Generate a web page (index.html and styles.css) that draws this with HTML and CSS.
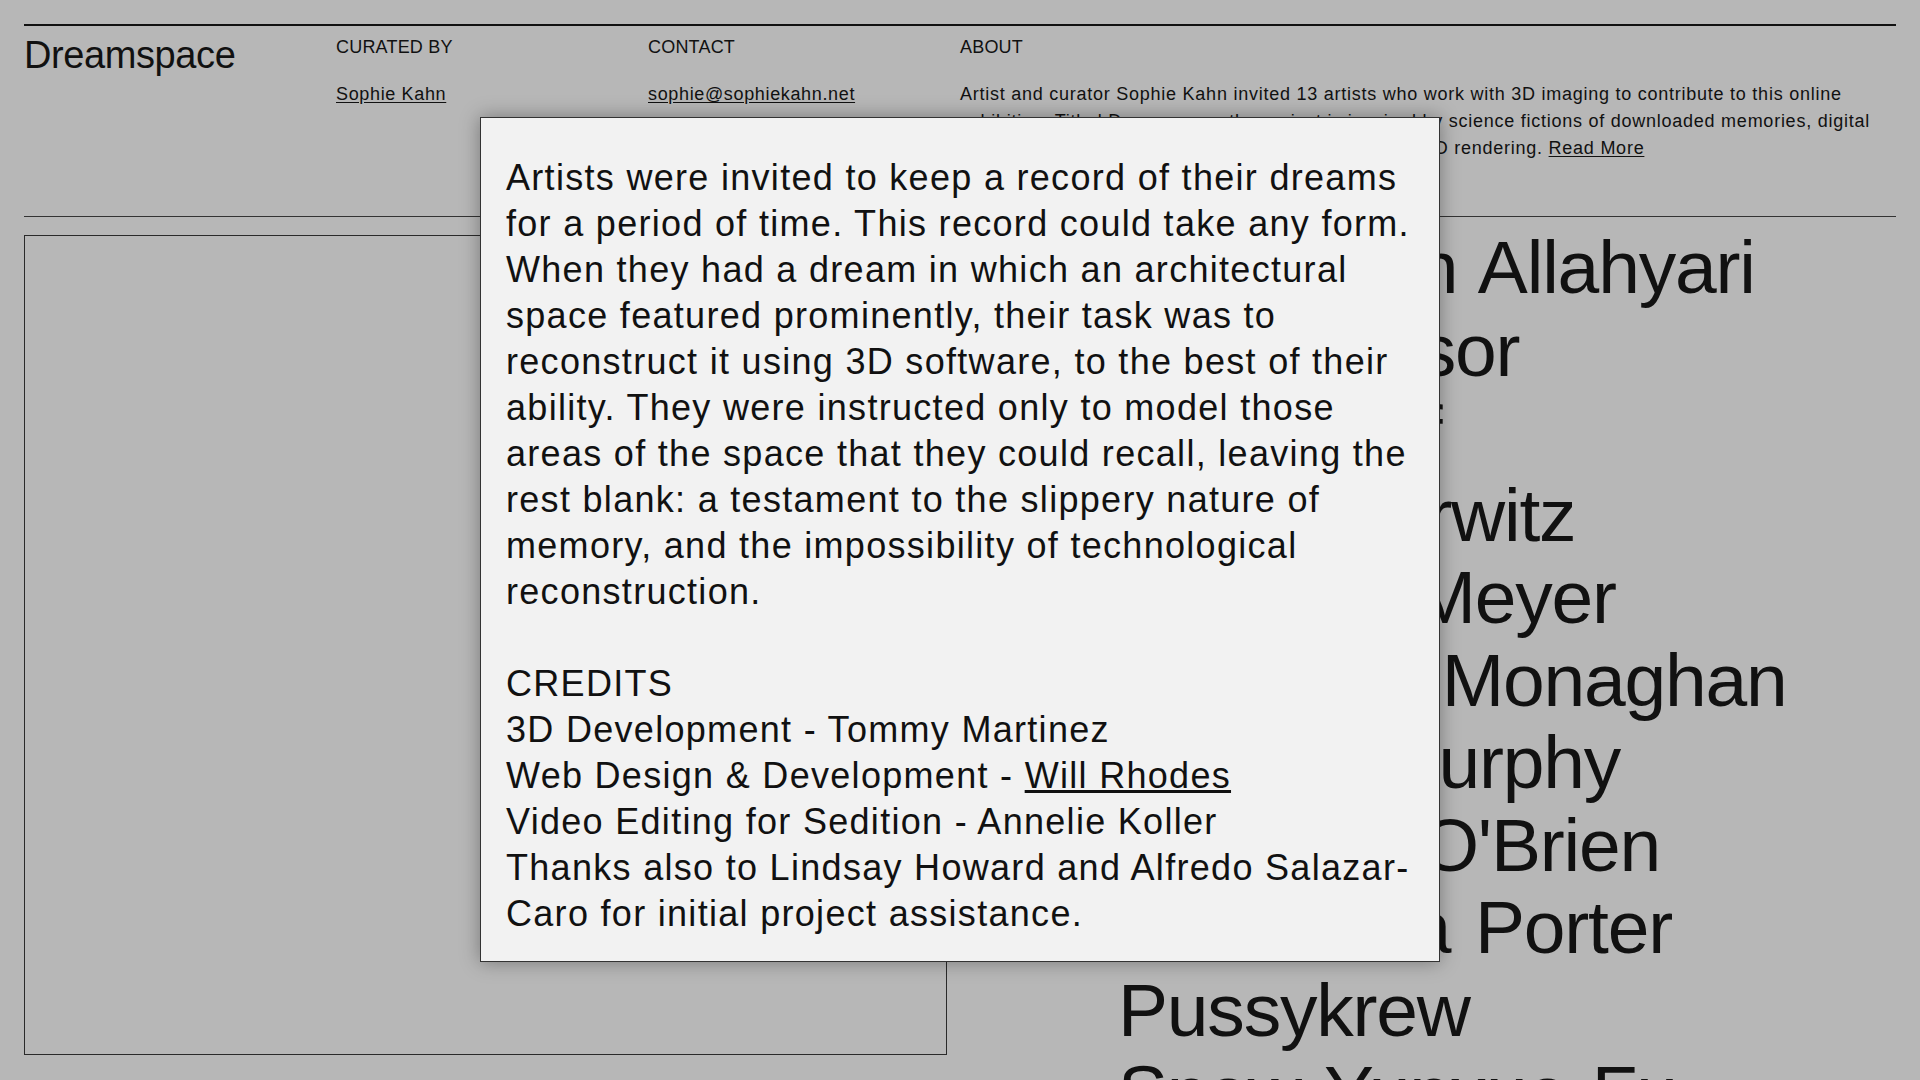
FILE: index.html
```html
<!DOCTYPE html>
<html lang="en">
<head>
<meta charset="utf-8">
<title>Dreamspace</title>
<link rel="stylesheet" href="styles.css">
</head>
<body>
<div class="page">
  <header class="site-header">
    <h1 class="title">Dreamspace</h1>
    <div class="col">
      <div class="label">CURATED BY</div>
      <a class="link" href="#">Sophie Kahn</a>
    </div>
    <div class="col">
      <div class="label">CONTACT</div>
      <a class="link" href="#">sophie@sophiekahn.net</a>
    </div>
    <div class="col about">
      <div class="label">ABOUT</div>
      <p class="about-text">Artist and curator Sophie Kahn invited 13 artists who work with 3D imaging to contribute to this online exhibition. Titled Dreamspace, the project is inspired by science fictions of downloaded memories, digital simulations, and the strange and uncanny glitches of 3D rendering. <a class="link" href="#">Read More</a></p>
    </div>
  </header>

  <main class="main">
    <div class="viewer"></div>
    <ul class="artists">
      <li>Morehshin Allahyari</li>
      <li>Amy Cassor</li>
      <li>Mark Dorf</li>
      <li>Adam Horwitz</li>
      <li>Jasmine Meyer</li>
      <li>Jonathan Monaghan</li>
      <li>Brenna Murphy</li>
      <li>Nicholas O'Brien</li>
      <li>Samantha Porter</li>
      <li>Pussykrew</li>
      <li>Snow Yunxue Fu</li>
    </ul>
  </main>
</div>

<div class="modal">
  <p class="modal-text">Artists were invited to keep a record of their dreams for a period of time. This record could take any form. When they had a dream in which an architectural space featured prominently, their task was to reconstruct it using 3D software, to the best of their ability. They were instructed only to model those areas of the space that they could recall, leaving the rest blank: a testament to the slippery nature of memory, and the impossibility of technological reconstruction.</p>
  <p class="modal-text credits">CREDITS<br>3D Development - Tommy Martinez<br>Web Design &amp; Development - <a class="link" href="#">Will Rhodes</a><br>Video Editing for Sedition - Annelie Koller<br>Thanks also to Lindsay Howard and Alfredo Salazar-Caro for initial project assistance.</p>
</div>
</body>
</html>
```

FILE: styles.css
```css
* { box-sizing: border-box; }

html, body {
  margin: 0;
  padding: 0;
  background: #b7b7b7;
  color: #111;
  font-family: "Liberation Sans", Arial, sans-serif;
}

.page {
  padding: 24px 24px 0;
}

.site-header {
  display: grid;
  grid-template-columns: repeat(6, 1fr);
  border-top: 2px solid #111;
  border-bottom: 1px solid #333;
  padding: 8px 0 54px;
}

.title {
  margin: 0;
  font-size: 38px;
  line-height: 42px;
  font-weight: 400;
  letter-spacing: -0.4px;
}

.col {
  font-size: 18px;
  line-height: 27px;
  letter-spacing: 0.65px;
}

.label {
  margin-bottom: 20px;
  letter-spacing: 0.2px;
}

.about {
  grid-column: 4 / 7;
}

.about-text {
  margin: 0;
  letter-spacing: 0.75px;
}

.link {
  color: #111;
  text-decoration: underline;
  text-underline-offset: 2px;
}

.main {
  display: grid;
  grid-template-columns: 923px 1fr;
  align-items: start;
  padding-top: 9px;
}

.viewer {
  margin-top: 9px;
  height: 820px;
  border: 1px solid #2a2a2a;
}

.artists {
  list-style: none;
  margin: 0;
  padding: 0 0 0 171px;
  font-size: 75px;
  line-height: 82.5px;
  letter-spacing: -1.2px;
  word-spacing: 5px;
  white-space: nowrap;
}

.modal {
  position: absolute;
  top: 117px;
  left: 480px;
  width: 960px;
  background: #f2f2f2;
  border: 1px solid #333;
  box-shadow: 0 0 18px rgba(0, 0, 0, 0.35);
  padding: 37px 20px 24px 25px;
}

.modal-text {
  margin: 0;
  font-size: 36px;
  line-height: 46px;
  letter-spacing: 1.3px;
}

.credits {
  margin-top: 46px;
}
```
